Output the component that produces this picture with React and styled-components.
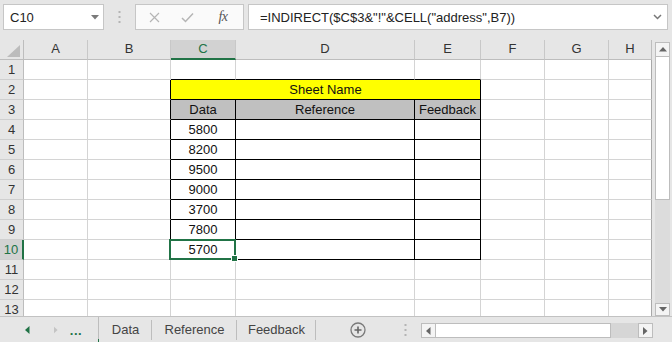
import React from 'react';
import styled, { createGlobalStyle } from 'styled-components';

const GREEN = '#217346';
const GRID = '#d4d4d4';
const CHROME = '#e6e6e6';

const Global = createGlobalStyle`
  html, body { margin: 0; padding: 0; background: ${CHROME}; }
  body { font-family: "Liberation Sans", Arial, sans-serif; }
`;

const Window = styled.div`
  width: 672px;
  height: 342px;
  display: flex;
  flex-direction: column;
  background: ${CHROME};
  overflow: hidden;
  color: #222;
  font-size: 13px;
`;

/* ---------- formula bar ---------- */
const Toolbar = styled.div`
  height: 40px;
  flex: none;
  display: flex;
  align-items: flex-start;
  padding: 4px 0 0 3px;
  box-sizing: border-box;
`;

const NameBox = styled.div`
  width: 101px;
  height: 26px;
  box-sizing: border-box;
  background: #fff;
  border: 1px solid #c6c6c6;
  display: flex;
  align-items: center;
  justify-content: space-between;
  padding: 0 4px 0 6px;
  font-size: 13px;
  color: #222;
`;

const Grip = styled.div`
  width: 31px;
  height: 26px;
  display: flex;
  align-items: center;
  justify-content: center;
`;

const FxBox = styled.div`
  width: 109px;
  height: 26px;
  box-sizing: border-box;
  background: #fafafa;
  border: 1px solid #c6c6c6;
  display: flex;
  align-items: center;
  padding-left: 12px;
`;

const FxSlot = styled.div`
  width: ${(p) => p.$w}px;
  display: flex;
  justify-content: center;
  align-items: center;
`;

const FxText = styled.span`
  font-family: "Liberation Serif", "Times New Roman", serif;
  font-style: italic;
  font-size: 14px;
  color: #555;
  letter-spacing: -0.5px;
`;

const FormulaInput = styled.div`
  margin-left: 4px;
  width: 420px;
  height: 26px;
  box-sizing: border-box;
  background: #fff;
  border: 1px solid #c6c6c6;
  display: flex;
  align-items: center;
  justify-content: space-between;
  padding: 0 5px 0 11px;
  font-size: 13px;
  color: #222;
  white-space: nowrap;
`;

/* ---------- sheet ---------- */
const SheetArea = styled.div`
  height: 276px;
  flex: none;
  display: flex;
`;

const Grid = styled.div`
  width: 652px;
  height: 276px;
  display: grid;
  grid-template-columns: 24px 64px 83px 65px 179px 66px 64px 64px 43px;
  grid-template-rows: repeat(14, 20px);
  overflow: hidden;
  background: #fff;
`;

const Corner = styled.div`
  background: ${CHROME};
  border-right: 1px solid #bdbdbd;
  border-bottom: 1px solid #bdbdbd;
  box-sizing: border-box;
  display: flex;
  align-items: flex-end;
  justify-content: flex-end;
  padding: 0 3px 2px 0;
`;

const ColHead = styled.div`
  box-sizing: border-box;
  background: ${(p) => (p.$sel ? '#d2d2d2' : CHROME)};
  border-right: 1px solid ${(p) => (p.$last ? '#bdbdbd' : '#c8c8c8')};
  border-bottom: ${(p) => (p.$sel ? `2px solid ${GREEN}` : '1px solid #bdbdbd')};
  color: ${(p) => (p.$sel ? GREEN : '#333')};
  text-align: center;
  line-height: 18px;
  font-size: 13px;
`;

const RowHead = styled.div`
  box-sizing: border-box;
  background: ${(p) => (p.$sel ? '#d2d2d2' : CHROME)};
  border-right: ${(p) => (p.$sel ? `2px solid ${GREEN}` : '1px solid #bdbdbd')};
  border-bottom: 1px solid #cfcfcf;
  color: ${(p) => (p.$sel ? GREEN : '#333')};
  text-align: center;
  line-height: 18px;
  padding-top: 1px;
  font-size: 13px;
`;

const Cell = styled.div`
  position: relative;
  box-sizing: border-box;
  grid-column: ${(p) => (p.$span ? `span ${p.$span}` : 'auto')};
  background: ${(p) => p.$bg || '#fff'};
  border-right: 1px solid ${(p) => p.$right || GRID};
  border-bottom: 1px solid ${(p) => p.$bottom || GRID};
  text-align: center;
  line-height: 18px;
  padding-top: 1px;
  font-size: 13px;
  color: #111;
  white-space: nowrap;
  z-index: ${(p) => (p.$active ? 2 : 'auto')};
`;

const Selection = styled.div`
  position: absolute;
  left: -2px;
  top: -1px;
  right: -1px;
  bottom: -1px;
  border: 2px solid ${GREEN};
  pointer-events: none;
`;

const FillHandle = styled.div`
  position: absolute;
  right: -4px;
  bottom: -4px;
  width: 5px;
  height: 5px;
  background: ${GREEN};
  border: 1px solid #fff;
`;

const VScroll = styled.div`
  width: 20px;
  display: flex;
  flex-direction: column;
  padding: 2px 1px 0 3px;
  box-sizing: border-box;
  background: ${CHROME};
`;

const VTrack = styled.div`
  flex: 1;
  display: flex;
  flex-direction: column;
  background: #dcdcdc;
  width: 15px;
`;

const ArrowBox = styled.div`
  width: ${(p) => p.$w || 15}px;
  height: ${(p) => p.$h || 15}px;
  flex: none;
  box-sizing: border-box;
  background: #f4f4f4;
  border: 1px solid #bdbdbd;
  display: flex;
  align-items: center;
  justify-content: center;
`;

const VThumb = styled.div`
  height: 143px;
  box-sizing: border-box;
  background: #fff;
  border: 1px solid #bdbdbd;
  border-top: none;
`;

const Spacer = styled.div`
  flex: 1;
`;

/* ---------- tab bar ---------- */
const TabBar = styled.div`
  height: 26px;
  flex: none;
  display: flex;
  align-items: stretch;
  border-top: 1px solid #c2c2c2;
  box-sizing: border-box;
  background: ${CHROME};
`;

const NavArea = styled.div`
  width: 98px;
  display: flex;
  align-items: center;
  border-right: 1px solid #bdbdbd;
  position: relative;
`;

const NavSlot = styled.div`
  width: ${(p) => p.$w}px;
  display: flex;
  justify-content: center;
  align-items: center;
`;

const Dots = styled.span`
  color: ${GREEN};
  font-weight: bold;
  font-size: 13px;
  letter-spacing: 0.5px;
  margin-top: 1px;
`;

const GreenTick = styled.div`
  position: absolute;
  right: -1px;
  bottom: 0;
  width: 1px;
  height: 3px;
  background: ${GREEN};
`;

const Tab = styled.div`
  width: ${(p) => p.$w}px;
  display: flex;
  align-items: center;
  justify-content: center;
  color: #444;
  font-size: 13px;
  position: relative;
  &::after {
    content: '';
    position: absolute;
    right: 0;
    top: 3px;
    bottom: 2px;
    width: 1px;
    background: #bdbdbd;
  }
`;

const IconSlot = styled.div`
  width: ${(p) => p.$w}px;
  display: flex;
  align-items: center;
  justify-content: center;
`;

const HScroll = styled.div`
  width: 232px;
  height: 15px;
  align-self: center;
  display: flex;
  background: #d6d6d6;
  margin-top: 2px;
`;

const HThumb = styled.div`
  width: 175px;
  box-sizing: border-box;
  background: #fff;
  border: 1px solid #bdbdbd;
  border-left: none;
`;

const COLS = ['A', 'B', 'C', 'D', 'E', 'F', 'G', 'H'];
const VALUES = [5800, 8200, 9500, 9000, 3700, 7800, 5700];

const Tri = ({ dir, color = '#777', size = 7 }) => {
  const s = size;
  const pts = {
    down: `0,0 ${s},0 ${s / 2},${s / 2 + 0.5}`,
    up: `0,${s / 2 + 0.5} ${s},${s / 2 + 0.5} ${s / 2},0`,
    left: `${s / 2 + 0.5},0 ${s / 2 + 0.5},${s} 0,${s / 2}`,
    right: `0,0 0,${s} ${s / 2 + 0.5},${s / 2}`,
  }[dir];
  const vertical = dir === 'up' || dir === 'down';
  const w = vertical ? s : s / 2 + 1;
  const h = vertical ? s / 2 + 1 : s;
  return (
    <svg width={w} height={h} viewBox={`0 0 ${w} ${h}`}>
      <polygon points={pts} fill={color} />
    </svg>
  );
};

const VDots = () => (
  <svg width="3" height="12" viewBox="0 0 3 12">
    <rect x="0.5" y="0" width="2" height="2" fill="#b4b4b4" />
    <rect x="0.5" y="5" width="2" height="2" fill="#b4b4b4" />
    <rect x="0.5" y="10" width="2" height="2" fill="#b4b4b4" />
  </svg>
);

function dataCell(r, ci) {
  if (r === 3) return ['Data', 'Reference', 'Feedback'][ci - 2];
  if (r >= 4 && r <= 10 && ci === 2) return VALUES[r - 4];
  return '';
}

function renderRow(r) {
  const cells = [
    <RowHead key="h" $sel={r === 10}>{r}</RowHead>,
  ];
  for (let ci = 0; ci < COLS.length; ci++) {
    if (r === 2 && ci === 2) {
      cells.push(
        <Cell key={ci} $span={3} $bg="#ffff00" $right="#000" $bottom="#000">
          Sheet Name
        </Cell>
      );
      ci += 2;
      continue;
    }
    const inTableCol = ci >= 2 && ci <= 4;
    const bottom = r <= 10 && inTableCol ? '#000' : undefined;
    const right = r >= 2 && r <= 10 && ci >= 1 && ci <= 4 ? '#000' : ci === 7 ? '#a8a8a8' : undefined;
    const active = r === 10 && ci === 2;
    cells.push(
      <Cell
        key={ci}
        $bg={r === 3 && inTableCol ? '#c0c0c0' : undefined}
        $right={right}
        $bottom={bottom}
        $active={active}
      >
        {dataCell(r, ci)}
        {active && (
          <Selection>
            <FillHandle />
          </Selection>
        )}
      </Cell>
    );
  }
  return cells;
}

export default function App() {
  const rows = Array.from({ length: 13 }, (_, i) => i + 1);
  return (
    <>
      <Global />
      <Window>
        <Toolbar>
          <NameBox>
            <span>C10</span>
            <Tri dir="down" color="#7a7a7a" size={8} />
          </NameBox>
          <Grip>
            <VDots />
          </Grip>
          <FxBox>
            <FxSlot $w={12}>
              <svg width="11" height="11" viewBox="0 0 11 11">
                <path d="M1 1 L10 10 M10 1 L1 10" stroke="#b5b5b5" strokeWidth="1.2" fill="none" />
              </svg>
            </FxSlot>
            <FxSlot $w={54}>
              <svg width="13" height="11" viewBox="0 0 13 11">
                <path d="M1 6 L4.5 9.5 L12 1.5" stroke="#b5b5b5" strokeWidth="1.5" fill="none" />
              </svg>
            </FxSlot>
            <FxSlot $w={18}>
              <FxText>fx</FxText>
            </FxSlot>
          </FxBox>
          <FormulaInput>
            <span>=INDIRECT($C$3&amp;"!"&amp;CELL("address",B7))</span>
            <svg width="9" height="6" viewBox="0 0 9 6">
              <path d="M1 1 L4.5 4.5 L8 1" stroke="#777" strokeWidth="1.5" fill="none" />
            </svg>
          </FormulaInput>
        </Toolbar>

        <SheetArea>
          <Grid>
            <Corner>
              <svg width="13" height="12" viewBox="0 0 13 12">
                <polygon points="13,0 13,12 0,12" fill="#bcbcbc" />
              </svg>
            </Corner>
            {COLS.map((c, i) => (
              <ColHead key={c} $sel={c === 'C'} $last={i === COLS.length - 1}>
                {c}
              </ColHead>
            ))}
            {rows.map((r) => renderRow(r))}
          </Grid>
          <VScroll>
            <VTrack>
              <ArrowBox>
                <Tri dir="up" color="#666" size={8} />
              </ArrowBox>
              <VThumb />
              <Spacer />
              <ArrowBox $h={13}>
                <Tri dir="down" color="#666" size={8} />
              </ArrowBox>
            </VTrack>
          </VScroll>
        </SheetArea>

        <TabBar>
          <NavArea>
            <NavSlot $w={54}>
              <Tri dir="left" color={GREEN} size={8} />
            </NavSlot>
            <NavSlot $w={4}>
              <Tri dir="right" color="#c4c4c4" size={8} />
            </NavSlot>
            <NavSlot $w={36}>
              <Dots>...</Dots>
            </NavSlot>
            <GreenTick />
          </NavArea>
          <Tab $w={53}>Data</Tab>
          <Tab $w={85}>Reference</Tab>
          <Tab $w={79}>Feedback</Tab>
          <IconSlot $w={84}>
            <svg width="16" height="16" viewBox="0 0 16 16">
              <circle cx="8" cy="8" r="7" stroke="#7a7a7a" strokeWidth="1.3" fill="none" />
              <path d="M8 4.5 V11.5 M4.5 8 H11.5" stroke="#666" strokeWidth="1.6" />
            </svg>
          </IconSlot>
          <IconSlot $w={10}>
            <VDots />
          </IconSlot>
          <IconSlot $w={11} />
          <HScroll>
            <ArrowBox $w={15}>
              <Tri dir="left" color="#666" size={8} />
            </ArrowBox>
            <HThumb />
            <Spacer />
            <ArrowBox $w={15}>
              <Tri dir="right" color="#666" size={8} />
            </ArrowBox>
          </HScroll>
        </TabBar>
      </Window>
    </>
  );
}
